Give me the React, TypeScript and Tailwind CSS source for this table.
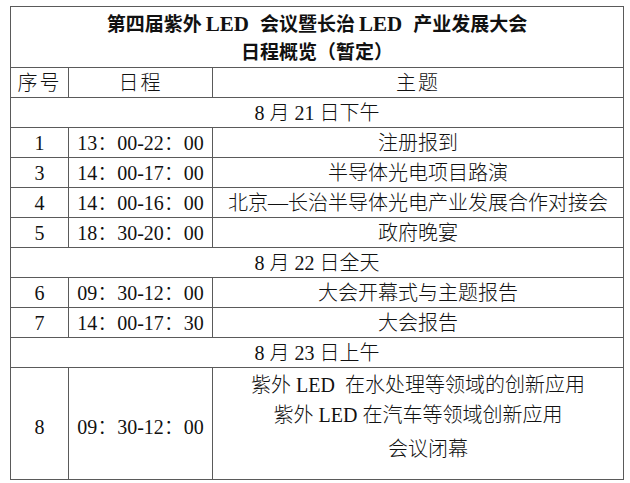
const cell = "border border-[#5a5a5a] p-0 text-center align-middle";

const dayRow = (label: React.ReactNode) => (
  <tr>
    <td colSpan={3} className={`${cell} h-[30px]`}>
      {label}
    </td>
  </tr>
);

type Item = { no: string; time: string; topic: string };

const App = () => {
  const day1: Item[] = [
    { no: "1", time: "13：00-22：00", topic: "注册报到" },
    { no: "3", time: "14：00-17：00", topic: "半导体光电项目路演" },
    { no: "4", time: "14：00-16：00", topic: "北京—长治半导体光电产业发展合作对接会" },
    { no: "5", time: "18：30-20：00", topic: "政府晚宴" },
  ];
  const day2: Item[] = [
    { no: "6", time: "09：30-12：00", topic: "大会开幕式与主题报告" },
    { no: "7", time: "14：00-17：30", topic: "大会报告" },
  ];

  const rows = (items: Item[]) =>
    items.map((it) => (
      <tr key={it.no}>
        <td className={`${cell} h-[30px]`}>{it.no}</td>
        <td className={`${cell} h-[30px]`}>{it.time}</td>
        <td className={`${cell} h-[30px] whitespace-nowrap`}>{it.topic}</td>
      </tr>
    ));

  return (
    <div className="min-h-screen bg-white pl-[10px] pt-[6px] text-[#111] font-['Liberation_Serif','Noto_Sans_CJK_SC',serif] text-[20px] leading-[28px] font-light">
      <table className="w-[613px] border-collapse table-fixed">
        <colgroup>
          <col className="w-[58px]" />
          <col className="w-[144px]" />
          <col className="w-[411px]" />
        </colgroup>
        <tbody>
          {/* TITLE */}
          <tr>
            <td colSpan={3} className={`${cell} h-[58px] pt-[3px] align-top font-bold text-[19px] leading-[28px]`}>
              <div>
                第四届紫外<span className="ml-[4px] mr-[11px] text-[21px]">LED</span>会议暨长治<span className="ml-[4px] mr-[11px] text-[21px]">LED</span>产业发展大会
              </div>
              <div>日程概览（暂定）</div>
            </td>
          </tr>

          {/* HEADER */}
          <tr>
            <td className={`${cell} h-[30px] tracking-[2px]`}>序号</td>
            <td className={`${cell} h-[30px] tracking-[2px]`}>日程</td>
            <td className={`${cell} h-[30px] tracking-[2px]`}>主题</td>
          </tr>

          {dayRow("8 月 21 日下午")}
          {rows(day1)}
          {dayRow("8 月 22 日全天")}
          {rows(day2)}
          {dayRow("8 月 23 日上午")}

          <tr>
            <td className={`${cell} h-[112px] pt-[6px]`}>8</td>
            <td className={`${cell} h-[112px] pt-[6px]`}>09：30-12：00</td>
            <td className={`${cell} h-[112px] align-top pt-[2px] whitespace-pre`}>
              <div className="leading-[30px]">紫外 LED  在水处理等领域的创新应用</div>
              <div className="leading-[30px]">紫外 LED 在汽车等领域创新应用</div>
              <div className="leading-[30px] mt-[4px] pl-[20px]">会议闭幕</div>
            </td>
          </tr>
        </tbody>
      </table>
    </div>
  );
};

export default App;
